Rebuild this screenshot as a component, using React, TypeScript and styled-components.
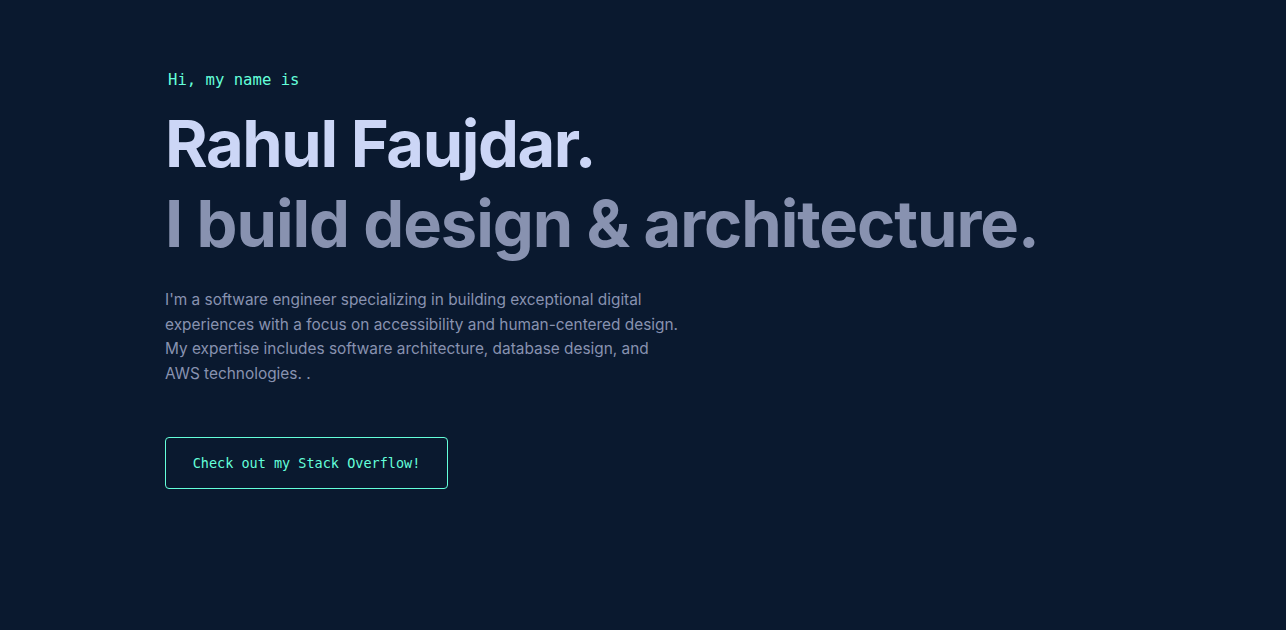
import React from "react";
import styled, { createGlobalStyle } from "styled-components";

const GlobalStyle = createGlobalStyle`
  html, body {
    margin: 0;
    padding: 0;
    background: #0a192f;
  }
  * { box-sizing: border-box; }
`;

const Page = styled.main`
  min-height: 630px;
  background: #0a192f;
  padding: 69px 165px 0;
`;

const Hero = styled.section`
  display: flex;
  flex-direction: column;
  align-items: flex-start;
`;

const Greeting = styled.h1`
  margin: 0 0 18px 3px;
  color: #64ffda;
  font-family: "DejaVu Sans Mono", "Liberation Mono", monospace;
  font-size: 15.6px;
  font-weight: 400;
  line-height: 22px;
`;

const BigHeading = styled.h2<{ $muted?: boolean }>`
  margin: ${(p) => (p.$muted ? "10px 0 0" : "0")};
  color: ${(p) => (p.$muted ? "#8892b0" : "#ccd6f6")};
  font-family: Inter, "Noto Sans", sans-serif;
  font-size: 65px;
  font-weight: 700;
  letter-spacing: ${(p) => (p.$muted ? "-1.05px" : "-1.4px")};
  line-height: 70px;
`;

const Intro = styled.p`
  margin: 29px 0 0;
  max-width: 522px;
  color: #8892b0;
  font-family: Inter, "Noto Sans", sans-serif;
  font-size: 15.4px;
  line-height: 24.7px;
`;

const Button = styled.a`
  margin-top: 50px;
  display: inline-flex;
  align-items: center;
  justify-content: center;
  width: 283px;
  height: 52px;
  border: 1px solid #64ffda;
  border-radius: 4px;
  color: #64ffda;
  font-family: "DejaVu Sans Mono", "Liberation Mono", monospace;
  font-size: 13.5px;
  text-decoration: none;
`;

export default function App() {
  return (
    <>
      <GlobalStyle />
      <Page>
        <Hero>
          <Greeting>Hi, my name is</Greeting>
          <BigHeading>Rahul Faujdar.</BigHeading>
          <BigHeading $muted>I build design &amp; architecture.</BigHeading>
          <Intro>
            I'm a software engineer specializing in building exceptional digital
            experiences with a focus on accessibility and human-centered design.
            My expertise includes software architecture, database design, and
            AWS technologies. .
          </Intro>
          <Button href="#">Check out my Stack Overflow!</Button>
        </Hero>
      </Page>
    </>
  );
}
